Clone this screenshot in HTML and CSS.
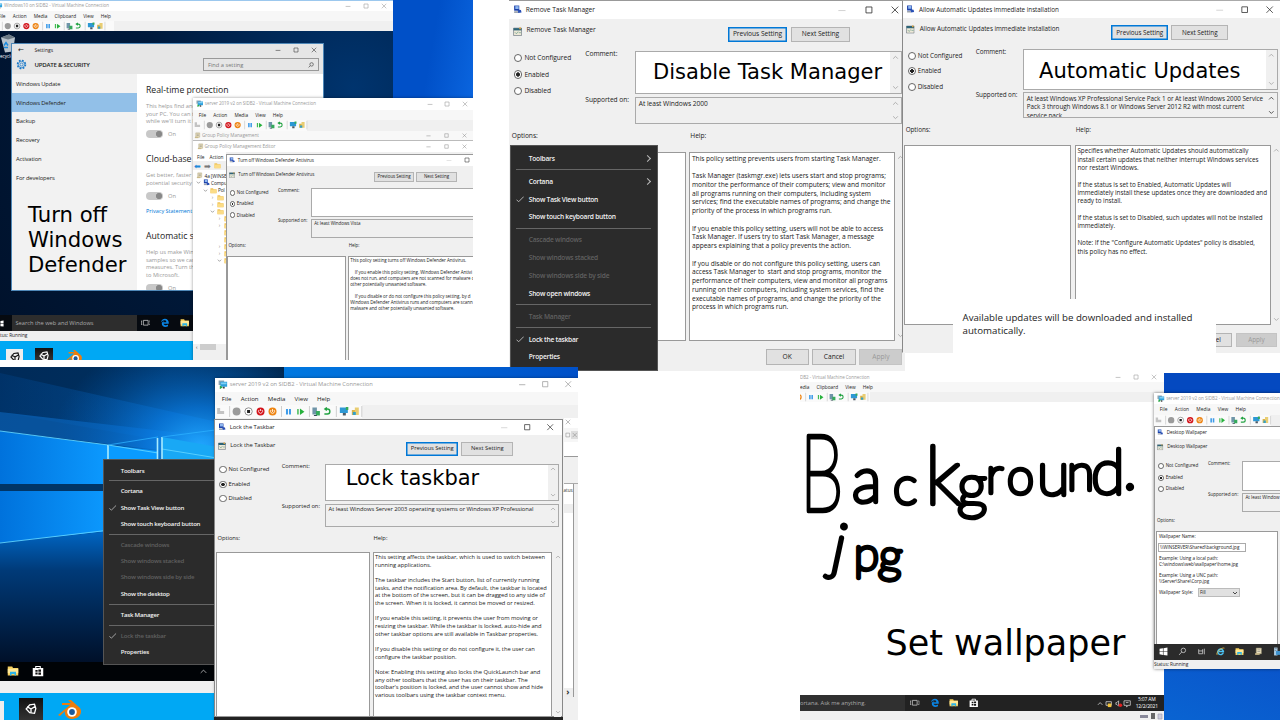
FILE: index.html
```html
<!DOCTYPE html>
<html lang="en">
<head>
<meta charset="utf-8">
<title>Group Policy settings</title>
<link rel="stylesheet" href="styles.css">
</head>
<body>
<svg class="defs" aria-hidden="true">
  <linearGradient id="sky" x1="0" y1="0" x2="1" y2=".6"><stop offset="0" stop-color="#002a58"/><stop offset=".45" stop-color="#00305f"/><stop offset="1" stop-color="#000f24"/></linearGradient>
  <radialGradient id="glow" cx="200" cy="80" r="150" gradientUnits="userSpaceOnUse" gradientTransform="translate(0 20) scale(1 .75)"><stop offset="0" stop-color="#22a8ff"/><stop offset=".35" stop-color="#0a80ea" stop-opacity=".75"/><stop offset="1" stop-color="#0058b0" stop-opacity="0"/></radialGradient>
  <linearGradient id="pane" x1="0" y1="0" x2="1" y2="0"><stop offset="0" stop-color="#0072dc"/><stop offset="1" stop-color="#0c9aff"/></linearGradient>
  <linearGradient id="beam" x1="0" y1="0" x2="1" y2="0"><stop offset="0" stop-color="#003c7c"/><stop offset="1" stop-color="#0b7fe6"/></linearGradient>
  <linearGradient id="low" x1="0" y1="0" x2="0" y2="1"><stop offset="0" stop-color="#0066c4"/><stop offset=".3" stop-color="#003a78"/><stop offset="1" stop-color="#001029" /></linearGradient>
  <symbol id="vm" viewBox="0 0 16 16"><path d="M1 1h9v7H1z" fill="#8aa4b4"/><path d="M4 3h11v8H4z" fill="#2da0dc"/><path d="M5 4h9v3H5z" fill="#7fd0f5"/><path d="M8 11h3v3H8z" fill="#444"/><path d="M3 9l5 3-5 3z" fill="#28a745"/></symbol>
  <symbol id="pol" viewBox="0 0 16 16"><path d="M2 1h9v9H2z" fill="#1b3fa8"/><path d="M4 2h6v5H4z" fill="#8fb8f0"/><path d="M8 8l6 1 1 4-6 1z" fill="#284fb5"/><path d="M2 11h7v3H2z" fill="#9aa2ae"/></symbol>
  <symbol id="form" viewBox="0 0 16 16"><path d="M1 2h14v13H1z" fill="#eee9d8" stroke="#51606e"/><path d="M1 2h14v4H1z" fill="#2d6478"/><path d="M3 9l3 3 3-4M10 10h4" fill="none" stroke="#4c8a78"/><path d="M11 1h3v3h-3z" fill="#e0a33c"/></symbol>
  <symbol id="scroll" viewBox="0 0 16 16"><path d="M4 2h9v10H4z" fill="#e9dfbd" stroke="#aaa07c"/><path d="M2 11h8v3H2z" fill="#c9b98a"/><path d="M6 5h5M6 8h5" stroke="#777"/></symbol>
  <symbol id="folder" viewBox="0 0 16 16"><path d="M1 3h6l1 2h7v9H1z" fill="#f0c45a"/><path d="M1 6h14v8H1z" fill="#fbdc86"/></symbol>
  <symbol id="explorer" viewBox="0 0 16 16"><path d="M1 2h6l1 2h7v10H1z" fill="#f5cf5e"/><path d="M1 5h14v6H1z" fill="#ffe896"/><path d="M4 14V9h8v5h-2v-2H6v2z" fill="#2bb4e8"/></symbol>
  <symbol id="edge" viewBox="0 0 16 16"><path d="M1.500 7.500C2 3.500 5 1.200 8.300 1.200c4 0 6.500 3 6.500 6.800v1.500H6c.4 2.600 4.400 3.300 7.500 1.600v2.800C8.500 16.500 3 14.500 3 9.800c0-2.300 1.300-4 3.300-4.900-.5.700-.7 1.400-.8 2.100h5.200c0-4.200-6-4-9.200.5z" fill="#0a84e4"/></symbol>
  <symbol id="ie" viewBox="0 0 16 16"><path d="M13 10a5 5 0 1 1 .2-2H5" fill="none" stroke="#4cc4f5" stroke-width="2.600"/><path d="M2 14C-1 10 10 0 15 2" fill="none" stroke="#f2c84b" stroke-width="1.400"/></symbol>
  <symbol id="store" viewBox="0 0 16 16"><path d="M5 5V2h6v3" fill="none" stroke="#fff" stroke-width="1.400"/><path d="M1 4h14v11H1z" fill="#fff"/><path d="M4.500 6.500h3v2.500h-3zM8.500 6h3.500v3H8.500zM4.500 10h3v2.500h-3zM8.500 10h3.500v3H8.500z" fill="#111"/></symbol>
  <symbol id="taskview" viewBox="0 0 16 16"><path d="M4 4h8v8H4zM2 5H.5v6H2M14 5h1.500v6H14" fill="none" stroke="#ccc" stroke-width="1.300"/></symbol>
  <symbol id="win" viewBox="0 0 16 16"><path d="M1 3l6-1v5.500H1zM8 2l7-1v6.500H8zM1 8.500h6V14l-6-1zM8 8.500h7V15l-7-1z" fill="#fff"/></symbol>
  <symbol id="srv" viewBox="0 0 16 16"><path d="M2 1h6v14H2z" fill="#b9d7ee"/><path d="M5 7h10v7H5z" fill="#3f93cf"/><path d="M3 3h4M3 6h3" stroke="#456"/></symbol>
  <symbol id="gear" viewBox="0 0 16 16"><circle cx="8" cy="8" r="5.800" fill="none" stroke="#1878c8" stroke-width="2.200" stroke-dasharray="2.600 1.950"/><circle cx="8" cy="8" r="4.600" fill="none" stroke="#1878c8" stroke-width="1.100"/><circle cx="8" cy="8" r="2.200" fill="none" stroke="#1878c8" stroke-width="1.100"/></symbol>
  <symbol id="unity" viewBox="0 0 16 16"><path d="M8 8L3.500 5.300M8 8l4.500-2.700M8 8v5.200M2.500 8L6.500 3.300l5.500-.8 1.500 5-1.500 5.500-5.500-.8z" fill="none" stroke="currentColor" stroke-width="1.500"/></symbol>
  <symbol id="blender" viewBox="0 0 24 20"><path d="M1 15L13 5H5V3h9l-3-3h3l9 8c3 5-1 11-8 11-5 0-8-4-7-8l-5 5z" fill="#ee7d0e"/><circle cx="15" cy="12" r="4.800" fill="#fff"/><circle cx="15" cy="12" r="2.900" fill="#1e5a9c"/></symbol>
  <symbol id="bin" viewBox="0 0 16 18"><path d="M1 3l8-3 6 3-2 14-8 1z" fill="#b9c3cb"/><path d="M1 3l7 2 7-2-6-3z" fill="#6d7a85"/><path d="M4 11l2-3 2 3M4 13h4" fill="none" stroke="#1a8be0" stroke-width="1.500"/></symbol>
  <symbol id="check" viewBox="0 0 8 8"><path d="M.5 4.500l2 2L7.500 1.500" fill="none" stroke="#bbb" stroke-width=".9"/></symbol>
  <symbol id="ctl-min" viewBox="0 0 10 10"><path d="M2 5.500h6" stroke="currentColor" stroke-width=".7"/></symbol>
  <symbol id="ctl-max" viewBox="0 0 10 10"><path d="M2.500 2.500h5v5h-5z" fill="none" stroke="currentColor" stroke-width=".7"/></symbol>
  <symbol id="ctl-x" viewBox="0 0 10 10"><path d="M2.200 2.200l5.600 5.600M7.800 2.200l-5.600 5.600" stroke="currentColor" stroke-width=".7"/></symbol>
  <symbol id="up" viewBox="0 0 6 6"><path d="M1 4l2-2 2 2" fill="none" stroke="currentColor" stroke-width=".8"/></symbol>
  <symbol id="down" viewBox="0 0 6 6"><path d="M1 2l2 2 2-2" fill="none" stroke="currentColor" stroke-width=".8"/></symbol>
  <symbol id="tools" viewBox="0 0 150 13">
    <path d="M2 9V3h3v3h4v3z" fill="#c3c3c3"/><path d="M14.500 1v11M66.500 1v11M94.500 1v11M121.500 1v11M147 1v11" stroke="#cfcfcf"/>
    <circle cx="21.500" cy="6.500" r="4" fill="#9b9b9b"/><circle cx="33.500" cy="6.500" r="3.700" fill="#fff" stroke="#777" stroke-width=".8"/><path d="M32 5h3v3h-3z" fill="#222"/>
    <circle cx="45.500" cy="6.500" r="4" fill="#d3151c"/><path d="M44 5a2 2 0 1 0 3 0M45.500 4v2" fill="none" stroke="#fff" stroke-width=".8"/>
    <circle cx="57.500" cy="6.500" r="4" fill="#ee8412"/><path d="M57.500 4v3M56 5a2 2 0 1 0 3 0" fill="none" stroke="#fff" stroke-width=".8"/>
    <path d="M71 4h2v5.500h-2zM74 4h2v5.500h-2z" fill="#3d9be9"/><path d="M83 4v5.500" stroke="#27b13c" stroke-width="1.300"/><path d="M85 3.500L89.500 6.700 85 10z" fill="#27b13c"/>
    <path d="M97.500 2.500h4.500v7h-4.500z" fill="#6f95a8"/><path d="M101 6h4v4.500h-4z" fill="#35aa5b"/><path d="M99 10h3v1h-3z" fill="#345"/><path d="M111 4h1.500a2.300 2.300 0 0 1 0 5h-3M112 2.500L110 4l2 1.500" fill="none" stroke="#23a343" stroke-width="1.400"/>
    <path d="M125 2.500h8V8h-8z" fill="#2d98d4"/><path d="M128 8h3v2.500h-3z" fill="#4a5a66"/><path d="M131 2h2.500v3H131z" fill="#35aa5b"/>
    <path d="M137 5h4v5h-4z" fill="#d9b44a"/><path d="M140 2.500h4V10h-4z" fill="#e9cd72"/><path d="M138 7h3v3h-3z" fill="#35a0c8"/>
  </symbol>
</svg>

<main class="board">

<!-- Remove Task Manager -->
<section class="shot shot-task">
  <div class="dlg dlg-task">
    <header class="dlg-title"><svg><use href="#pol"/></svg><span class="t">Remove Task Manager</span><div class="ctl"><svg class="off"><use href="#ctl-min"/></svg><svg><use href="#ctl-max"/></svg><svg><use href="#ctl-x"/></svg></div></header>
    <div class="dlg-head"><div class="dlg-name"><svg><use href="#form"/></svg><span class="t">Remove Task Manager</span></div><span class="btn focus"><span class="t">Previous Setting</span></span><span class="btn"><span class="t">Next Setting</span></span></div>
    <div class="dlg-form">
      <div class="radios"><label><i></i><span class="t">Not Configured</span></label><label><i class="on"></i><span class="t">Enabled</span></label><label><i></i><span class="t">Disabled</span></label></div>
      <div class="labels"><span class="t">Comment:</span><span class="t">Supported on:</span></div>
      <div class="boxes"><div class="box comment"><span class="note">Disable Task Manager</span><span class="bar"><svg><use href="#up"/></svg><svg><use href="#down"/></svg></span></div><div class="box support"><span class="t">At least Windows 2000</span><span class="bar"><svg><use href="#up"/></svg><svg><use href="#down"/></svg></span></div></div>
    </div>
    <div class="heads"><span class="t">Options:</span><span class="t">Help:</span></div>
    <div class="panels"><div class="panel"></div><div class="panel"><pre>This policy setting prevents users from starting Task Manager.

Task Manager (taskmgr.exe) lets users start and stop programs;
monitor the performance of their computers; view and monitor
all programs running on their computers, including system
services; find the executable names of programs; and change the
priority of the process in which programs run.

If you enable this policy setting, users will not be able to access
Task Manager. If users try to start Task Manager, a message
appears explaining that a policy prevents the action.

If you disable or do not configure this policy setting, users can
access Task Manager to  start and stop programs, monitor the
performance of their computers, view and monitor all programs
running on their computers, including system services, find the
executable names of programs, and change the priority of the
process in which programs run.</pre></div><span class="bar"><svg><use href="#up"/></svg><svg><use href="#down"/></svg></span></div>
    <footer class="dlg-foot"><span class="btn"><span class="t">OK</span></span><span class="btn"><span class="t">Cancel</span></span><span class="btn off"><span class="t">Apply</span></span></footer>
  </div>
  <ul class="menu menu-task">
    <li>Toolbars<b></b></li><li class="sep"></li>
    <li>Cortana<b></b></li><li><svg><use href="#check"/></svg>Show Task View button</li><li>Show touch keyboard button</li><li class="sep"></li>
    <li class="dim">Cascade windows</li><li class="dim">Show windows stacked</li><li class="dim">Show windows side by side</li><li>Show open windows</li><li class="sep"></li>
    <li class="dim">Task Manager</li><li class="sep"></li>
    <li><svg><use href="#check"/></svg>Lock the taskbar</li><li>Properties</li>
  </ul>
</section>

<!-- Automatic Updates -->
<section class="shot shot-auto">
  <div class="dlg dlg-auto">
    <header class="dlg-title"><svg><use href="#pol"/></svg><span class="t">Allow Automatic Updates immediate installation</span><div class="ctl"><svg class="off"><use href="#ctl-min"/></svg><svg><use href="#ctl-max"/></svg><svg><use href="#ctl-x"/></svg></div></header>
    <div class="dlg-head"><div class="dlg-name"><svg><use href="#form"/></svg><span class="t">Allow Automatic Updates immediate installation</span></div><span class="btn focus"><span class="t">Previous Setting</span></span><span class="btn"><span class="t">Next Setting</span></span></div>
    <div class="dlg-form">
      <div class="radios"><label><i></i><span class="t">Not Configured</span></label><label><i class="on"></i><span class="t">Enabled</span></label><label><i></i><span class="t">Disabled</span></label></div>
      <div class="labels"><span class="t">Comment:</span><span class="t">Supported on:</span></div>
      <div class="boxes"><div class="box comment"><span class="note">Automatic Updates</span><span class="bar"><svg><use href="#up"/></svg><svg><use href="#down"/></svg></span></div><div class="box support"><pre>At least Windows XP Professional Service Pack 1 or At least Windows 2000 Service
Pack 3 through Windows 8.1 or Windows Server 2012 R2 with most current
service pack</pre><span class="bar dark"><svg><use href="#up"/></svg><svg><use href="#down"/></svg></span></div></div>
    </div>
    <div class="heads"><span class="t">Options:</span><span class="t">Help:</span></div>
    <div class="panels"><div class="panel"></div><div class="panel"><pre>Specifies whether Automatic Updates should automatically
install certain updates that neither interrupt Windows services
nor restart Windows.

If the status is set to Enabled, Automatic Updates will
immediately install these updates once they are downloaded and
ready to install.

If the status is set to Disabled, such updates will not be installed
immediately.

Note: If the "Configure Automatic Updates" policy is disabled,
this policy has no effect.</pre></div><span class="bar"><svg><use href="#up"/></svg><svg><use href="#down"/></svg></span></div>
    <footer class="dlg-foot"><span class="btn cut"><span class="t">el</span></span><span class="btn off"><span class="t">Apply</span></span></footer>
  </div>
  <p class="caption">Available updates will be downloaded and installed<br>automatically.</p>
</section>

<!-- Windows Defender -->
<section class="shot shot-def">
  <div class="vmwin vm-win10">
    <div class="vm-title"><svg><use href="#vm"/></svg><span class="t">Windows10 on SIDB2 - Virtual Machine Connection</span><div class="ctl"><svg><use href="#ctl-min"/></svg><svg><use href="#ctl-max"/></svg><svg><use href="#ctl-x"/></svg></div></div>
    <div class="vm-menu"><span>File</span><span>Action</span><span>Media</span><span>Clipboard</span><span>View</span><span>Help</span></div>
    <div class="vm-tools"><svg><use href="#tools"/></svg></div>
    <div class="desk-dark"><svg class="bin"><use href="#bin"/></svg><span class="bin-label">ecycle</span>
      <div class="settings">
        <div class="set-title"><span class="back">←</span><span>Settings</span><div class="ctl"><svg><use href="#ctl-min"/></svg><svg><use href="#ctl-max"/></svg><svg><use href="#ctl-x"/></svg></div></div>
        <div class="set-head"><svg><use href="#gear"/></svg><b>UPDATE &amp; SECURITY</b><span class="find">Find a setting<svg viewBox="0 0 8 8"><circle cx="4.800" cy="3.200" r="2.300"/><path d="M3 5L.8 7.200"/></svg></span></div>
        <div class="set-body">
          <nav><a>Windows Update</a><a class="sel">Windows Defender</a><a>Backup</a><a>Recovery</a><a>Activation</a><a>For developers</a></nav>
          <article>
            <h3>Real-time protection</h3><p>This helps find and<br>your PC. You can t<br>while we'll turn it b</p><div class="sw"><i></i>On</div>
            <h3>Cloud-base</h3><p>Get better, faster<br>potential security</p><div class="sw tight"><i></i>On</div><a>Privacy Statement</a>
            <h3>Automatic s</h3><p>Help us make Win<br>samples so we can<br>measures. Turn th<br>to Microsoft.</p><div class="sw"><i></i>On</div>
          </article>
        </div>
      </div>
    </div>
    <div class="task10"><svg class="w"><use href="#win"/></svg><span class="search">Search the web and Windows</span><svg><use href="#taskview"/></svg><svg><use href="#edge"/></svg><svg><use href="#explorer"/></svg></div>
    <div class="status cutl">tus: Running</div>
  </div>
  <div class="host-icons"><span class="tile light"><svg><use href="#unity"/></svg></span><span class="tile"><svg><use href="#unity"/></svg></span><svg class="bl"><use href="#blender"/></svg></div>
  <p class="note note-def">Turn off<br>Windows<br>Defender</p>
  <div class="vmwin vm-srv1">
    <div class="vm-title"><svg><use href="#vm"/></svg><span class="t">server 2019 v2 on SIDB2 - Virtual Machine Connection</span><div class="ctl"><svg><use href="#ctl-min"/></svg><svg><use href="#ctl-max"/></svg><svg><use href="#ctl-x"/></svg></div></div>
    <div class="vm-menu"><span>File</span><span>Action</span><span>Media</span><span>View</span><span>Help</span></div>
    <div class="vm-tools"><svg><use href="#tools"/></svg></div>
    <div class="gp-row one"><svg><use href="#scroll"/></svg><span>Group Policy Management</span><div class="ctl"><svg><use href="#ctl-min"/></svg><svg><use href="#ctl-max"/></svg><svg><use href="#ctl-x"/></svg></div></div>
    <div class="gp-row two"><svg><use href="#scroll"/></svg><span>Group Policy Management Editor</span><div class="ctl"><svg><use href="#ctl-min"/></svg><svg><use href="#ctl-max"/></svg><svg><use href="#ctl-x"/></svg></div></div>
    <div class="gp-menu"><span>File</span><span>Action</span></div>
    <div class="gp-tools"><span>⬅</span><span class="g">➡</span><svg><use href="#folder"/></svg></div>
    <div class="tree">
      <div><svg><use href="#scroll"/></svg>4a [WINSE</div><div><svg class="a"><use href="#down"/></svg><svg><use href="#pol"/></svg>Compu</div><div class="l1"><svg class="a"><use href="#down"/></svg><svg><use href="#folder"/></svg>Pol</div>
      <div class="l2"><em>›</em><svg><use href="#folder"/></svg></div><div class="l2"><em>›</em><svg><use href="#folder"/></svg></div><div class="l2"><svg class="a"><use href="#down"/></svg><svg><use href="#folder"/></svg></div>
      <div class="l3"><em>›</em><svg><use href="#folder"/></svg></div><div class="l3"><em>›</em><svg><use href="#folder"/></svg></div><div class="l3"><em></em><svg><use href="#folder"/></svg></div><div class="l3"><em></em><svg><use href="#folder"/></svg></div><div class="l3"><em>›</em><svg><use href="#folder"/></svg></div><div class="l3"><em>›</em><svg><use href="#folder"/></svg></div><div class="l3"><svg class="a"><use href="#down"/></svg><svg><use href="#folder"/></svg></div>
    </div>
    <div class="hbar"><em>‹</em><i></i></div>
  </div>
  <div class="dlg dlg-def">
    <header class="dlg-title"><svg><use href="#pol"/></svg><span class="t">Turn off Windows Defender Antivirus</span><div class="ctl"><svg class="off"><use href="#ctl-min"/></svg><svg><use href="#ctl-max"/></svg><svg><use href="#ctl-x"/></svg></div></header>
    <div class="dlg-head"><div class="dlg-name"><svg><use href="#form"/></svg><span class="t">Turn off Windows Defender Antivirus</span></div><span class="btn"><span class="t">Previous Setting</span></span><span class="btn"><span class="t">Next Setting</span></span></div>
    <div class="dlg-form">
      <div class="radios"><label><i></i><span class="t">Not Configured</span></label><label><i class="on"></i><span class="t">Enabled</span></label><label><i></i><span class="t">Disabled</span></label></div>
      <div class="labels"><span class="t">Comment:</span><span class="t">Supported on:</span></div>
      <div class="boxes"><div class="box comment"></div><div class="box support"><span class="t">At least Windows Vista</span></div></div>
    </div>
    <div class="heads"><span class="t">Options:</span><span class="t">Help:</span></div>
    <div class="panels"><div class="panel"></div><div class="panel"><pre>This policy setting turns off Windows Defender Antivirus.

    If you enable this policy setting, Windows Defender Antivi
does not run, and computers are not scanned for malware o
other potentially unwanted software.

    If you disable or do not configure this policy setting, by d
Windows Defender Antivirus runs and computers are scann
malware and other potentially unwanted software.</pre></div></div>
  </div>
</section>

<!-- Lock the Taskbar -->
<section class="shot shot-lock">
  <svg class="hero" viewBox="0 0 284 295" preserveAspectRatio="none">
    <path d="M0 0h284v295H0z" fill="url(#sky)"/>
    <path d="M0 6L284 70v25L0 45z" fill="url(#beam)" opacity=".45"/>
    <path d="M0 45L284 78v20L0 64z" fill="#0a62b8" opacity=".7"/>
    <path d="M0 0h284v295H0z" fill="url(#glow)"/>
    <path d="M0 64L108 78v42L0 117z" fill="url(#pane)"/><path d="M108 78l50 6v40H108z" fill="#0a9bff"/><path d="M162 70l122 22v40H162z" fill="#19a8f5"/>
    <path d="M0 124h110v40L0 176z" fill="url(#pane)"/><path d="M0 117h110v7H0z" fill="#013566"/>
    <path d="M0 176l110-12v131H0z" fill="url(#low)"/>
    <path d="M0 64L108 78l50 8M162 82l122 20M0 176l110-13" stroke="#5fd2ff" fill="none" stroke-width=".9"/>
    <path d="M108 78v50M157.500 71v23M162 70v24" stroke="#a8ecff" fill="none" stroke-width="1.600"/>
    <path d="M108 78l50-8M162 70l53-7" stroke="#2bb0ff" fill="none" stroke-width=".8"/>
  </svg>
  <div class="task-lock"><svg><use href="#explorer"/></svg><svg><use href="#store"/></svg><svg class="tray" viewBox="0 0 10 10"><path d="M1 7l4-4 4 4"/></svg></div>
  <div class="host-status"></div>
  <div class="host-icons low"><span class="tile light"></span><span class="tile"><svg><use href="#unity"/></svg></span><svg class="bl"><use href="#blender"/></svg></div>
  <ul class="menu menu-lock">
    <li>Toolbars</li><li class="sep"></li>
    <li>Cortana</li><li><svg><use href="#check"/></svg>Show Task View button</li><li>Show touch keyboard button</li><li class="sep"></li>
    <li class="dim">Cascade windows</li><li class="dim">Show windows stacked</li><li class="dim">Show windows side by side</li><li>Show the desktop</li><li class="sep"></li>
    <li>Task Manager</li><li class="sep"></li>
    <li class="dim"><svg><use href="#check"/></svg>Lock the taskbar</li><li>Properties</li>
  </ul>
  <div class="vmwin vm-srv2">
    <div class="vm-title"><svg><use href="#vm"/></svg><span class="t">server 2019 v2 on SIDB2 - Virtual Machine Connection</span><div class="ctl"><svg><use href="#ctl-min"/></svg><svg><use href="#ctl-max"/></svg><svg><use href="#ctl-x"/></svg></div></div>
    <div class="vm-menu"><span>File</span><span>Action</span><span>Media</span><span>View</span><span>Help</span></div>
    <div class="vm-tools"><svg><use href="#tools"/></svg></div>
    <div class="edge-col"><div class="e1"><svg><use href="#ctl-x"/></svg></div><div class="e2"><svg><use href="#ctl-max"/></svg><svg class="cx"><use href="#ctl-x"/></svg></div><div class="e3"></div><div class="e4"><span>atus</span><i></i><b>›</b></div></div>
  </div>
  <div class="dlg dlg-lock">
    <header class="dlg-title"><svg><use href="#pol"/></svg><span class="t">Lock the Taskbar</span><div class="ctl"><svg class="off"><use href="#ctl-min"/></svg><svg><use href="#ctl-max"/></svg><svg><use href="#ctl-x"/></svg></div></header>
    <div class="dlg-head"><div class="dlg-name"><svg><use href="#form"/></svg><span class="t">Lock the Taskbar</span></div><span class="btn focus"><span class="t">Previous Setting</span></span><span class="btn"><span class="t">Next Setting</span></span></div>
    <div class="dlg-form">
      <div class="radios"><label><i></i><span class="t">Not Configured</span></label><label><i class="on"></i><span class="t">Enabled</span></label><label><i></i><span class="t">Disabled</span></label></div>
      <div class="labels"><span class="t">Comment:</span><span class="t">Supported on:</span></div>
      <div class="boxes"><div class="box comment"><span class="note">Lock taskbar</span><span class="bar"><svg><use href="#up"/></svg><svg><use href="#down"/></svg></span></div><div class="box support"><span class="t">At least Windows Server 2003 operating systems or Windows XP Professional</span><span class="bar"><svg><use href="#up"/></svg><svg><use href="#down"/></svg></span></div></div>
    </div>
    <div class="heads"><span class="t">Options:</span><span class="t">Help:</span></div>
    <div class="panels"><div class="panel"></div><div class="panel"><pre>This setting affects the taskbar, which is used to switch between
running applications.

The taskbar includes the Start button, list of currently running
tasks, and the notification area. By default, the taskbar is located
at the bottom of the screen, but it can be dragged to any side of
the screen. When it is locked, it cannot be moved or resized.

If you enable this setting, it prevents the user from moving or
resizing the taskbar. While the taskbar is locked, auto-hide and
other taskbar options are still available in Taskbar properties.

If you disable this setting or do not configure it, the user can
configure the taskbar position.

Note: Enabling this setting also locks the QuickLaunch bar and
any other toolbars that the user has on their taskbar. The
toolbar's position is locked, and the user cannot show and hide
various toolbars using the taskbar context menu.</pre></div><span class="bar"><svg><use href="#up"/></svg><svg><use href="#down"/></svg></span></div>
  </div>
</section>

<!-- Desktop Wallpaper -->
<section class="shot shot-wall">
  <div class="vmwin vm-wall">
    <div class="vm-title"><span class="t">DB2 - Virtual Machine Connection</span><div class="ctl"><svg><use href="#ctl-min"/></svg><svg><use href="#ctl-max"/></svg><svg><use href="#ctl-x"/></svg></div></div>
    <div class="vm-menu"><span>edia</span><span>Clipboard</span><span>View</span><span>Help</span></div>
    <div class="vm-tools"><svg><use href="#tools"/></svg></div>
    <svg class="paper" viewBox="800 402 364 293">
      <text class="ink" transform="translate(800 511) scale(.66 1)" font-size="106">B</text>
      <text class="ink" x="852 893 925 957 986 1007 1037 1067 1091 1123" y="502 504 504 507 493 494 495 490 494 489"><tspan font-size="62">a</tspan><tspan font-size="52">c</tspan><tspan font-size="80">k</tspan><tspan font-size="60">g</tspan><tspan font-size="50">r</tspan><tspan font-size="49">o</tspan><tspan font-size="60">u</tspan><tspan font-size="50">n</tspan><tspan font-size="62">d</tspan><tspan font-size="60">.</tspan></text>
      <text class="ink" x="829 854 878" y="566 570 571" rotate="12 0 4"><tspan font-size="62">j</tspan><tspan font-size="46">p</tspan><tspan font-size="46">g</tspan></text>
      <text class="big" x="885.500" y="655">Set wallpaper</text>
    </svg>
    <div class="task10 tw"><span class="search">ortana. Ask me anything.</span><svg><use href="#taskview"/></svg><svg><use href="#edge"/></svg><svg><use href="#explorer"/></svg><svg><use href="#store"/></svg><span class="tray"><svg viewBox="0 0 40 10"><path d="M1 6.500l2.500-2.500L6 6.500M10 3h6v4h-6zM30 2h7v5h-3l-1 2V7h-3zM32 4h3M21 4h1l2-2v6l-2-2h-1z"/><path d="M12 5h4v4h-4z" class="y"/><circle cx="26" cy="7" r="2" class="r"/></svg></span><span class="clock">5:07 AM<br>12/2/2021</span></div>
    <div class="status right"><svg viewBox="0 0 24 8"><path d="M0 3h8v3H0z" fill="#889"/><path d="M11 1h4v6h-4z" fill="#666"/><path d="M18 2h4v5h-4z" fill="#ccd" stroke="#99a" stroke-width=".6"/></svg></div>
  </div>
  <div class="vmwin vm-srv3">
    <div class="vm-title"><svg><use href="#vm"/></svg><span class="t">server 2019 v2 on SIDB2 - Virtual Machine Connection</span></div>
    <div class="vm-menu"><span>File</span><span>Action</span><span>Media</span><span>View</span><span>Help</span></div>
    <div class="vm-tools"><svg><use href="#tools"/></svg></div>
    <div class="dlg dlg-wall">
      <header class="dlg-title"><svg><use href="#pol"/></svg><span class="t">Desktop Wallpaper</span></header>
      <div class="dlg-head"><div class="dlg-name"><svg><use href="#form"/></svg><span class="t">Desktop Wallpaper</span></div></div>
      <div class="dlg-form">
        <div class="radios"><label><i></i><span class="t">Not Configured</span></label><label><i class="on"></i><span class="t">Enabled</span></label><label><i></i><span class="t">Disabled</span></label></div>
        <div class="labels"><span class="t">Comment:</span><span class="t">Supported on:</span></div>
        <div class="boxes"><div class="box comment"></div><div class="box support"><span class="t">At least Window</span></div></div>
      </div>
      <div class="heads"><span class="t">Options:</span></div>
      <div class="panels"><div class="panel opts"><span class="t">Wallpaper Name:</span><span class="field"><span class="t">\\WINSERVER\Shared\background.jpg</span></span><pre>Example: Using a local path:
C:\windows\web\wallpaper\home.jpg</pre><pre>Example: Using a UNC path:
\\Server\Share\Corp.jpg</pre><div class="style"><span class="t">Wallpaper Style:</span><span class="select"><span class="t">Fill</span><svg><use href="#down"/></svg></span></div></div><div class="panel"></div></div>
    </div>
    <div class="task19"><svg><use href="#win"/></svg><svg viewBox="0 0 16 16" class="ln"><circle cx="9.500" cy="6" r="4"/><path d="M6.500 9L2 14"/></svg><svg viewBox="0 0 16 16" class="ln"><path d="M3 4v8h7V4M3 7h7M13 3v10"/></svg><svg class="c"><use href="#ie"/></svg><svg class="c"><use href="#explorer"/></svg><svg class="c"><use href="#scroll"/></svg><svg class="c"><use href="#srv"/></svg></div>
    <div class="status">Status: Running</div>
  </div>
</section>
</main>
</body>
</html>
```
FILE: styles.css
```css
* { box-sizing: border-box; }
body { margin: 0; background: #fff; font-family: "Open Sans", "Noto Sans", sans-serif; color: #222; }
ul, p, h3, pre { margin: 0; padding: 0; }
pre { font-family: inherit; }
.defs { position: absolute; width: 0; height: 0; }
.board { position: relative; width: 1280px; height: 720px; overflow: hidden; background: #fff; }
.shot { position: absolute; overflow: hidden; }
.shot-def { left: 0; top: 0; width: 472.5px; height: 360px; background: linear-gradient(100deg, #0050c8 82%, #0b66e0 92%, #0650cf); }
.shot-task { left: 509px; top: 0; width: 396px; height: 370.5px; background: #f0f0f0; }
.shot-auto { left: 902px; top: 0; width: 378px; height: 370px; background: #fff; clip-path: polygon(0 0, 378px 0, 378px 370px, 3px 370px, 3px 352.5px, 0 352.5px); }
.shot-lock { left: 0; top: 366.5px; width: 578px; height: 353.5px; background: linear-gradient(90deg, #0078e0 50%, #0050c8); }
.shot-wall { left: 800px; top: 372.5px; width: 480px; height: 347.5px; background: linear-gradient(200deg, #0449c0 15%, #0a50c8 50%, #0878dc 100%); }

/* policy dialog: sized in em so each instance scales from its font-size */
.t { font-size: .95em; letter-spacing: -.006em; white-space: nowrap; line-height: 1.2; }
.dlg { position: absolute; display: flex; flex-direction: column; background: #f0f0f0; width: 57em; color: #222; }
.dlg-task { left: 0; top: 0; font-size: 7px; height: 371px; border-top: 1px solid #999; }
.dlg-auto { left: 0; top: 0; font-size: 6.67px; height: 352.500px; border-left: 1px solid #888; border-top: 1px solid #aaa; }
.dlg-def { left: 225.5px; top: 153.500px; font-size: 4.72px; height: 220px; border: 1px solid #999; }
.dlg-lock { left: 214px; top: 52.300px; font-size: 6.12px; height: 298px; border: 1px solid #888; box-shadow: 0 4px #222; }
.dlg-wall { position: relative; font-size: 4.86px; height: 218px; flex: none; border: 1px solid #999; border-bottom: 0; overflow: hidden; }
.dlg-title { height: 2.5em; flex: none; background: #fff; display: flex; align-items: center; padding-left: .5em; gap: .6em; }
.dlg-title > svg, .dlg-name svg { width: 1.3em; height: 1.3em; flex: none; }
.ctl { margin-left: auto; display: flex; gap: 2.1em; padding-right: .4em; color: #333; }
.ctl svg { width: 1.7em; height: 1.7em; }
.ctl .off { opacity: .25; }
.dlg-title .ctl { padding-right: 1em; }
.dlg-head { height: 4.4em; flex: none; display: flex; padding-top: 1.15em; gap: .5em; }
.dlg-name { width: 30.75em; display: flex; gap: .7em; padding-left: .5em; align-items: flex-start; }
.dlg-name .t { margin-top: -.05em; }
.btn { width: 8.5em; height: 2.2em; border: 1px solid #b4b4b4; background: #e1e1e1; display: flex; align-items: center; justify-content: center; }
.btn.focus { border: 1px solid #0078d7; box-shadow: inset 0 0 0 .5px #0078d7; }
.btn.off { background: #ccc; border-color: #c4c4c4; color: #999; }
.btn.cut { padding-left: 2em; }
.dlg-form { height: 11.7em; flex: none; display: grid; grid-template-columns: 10.9em 7.1em 38.2em; }
.radios { padding: .1em 0 0 .7em; }
.radios label { display: flex; align-items: center; gap: .3em; height: 2.35em; }
.radios i { width: 1.2em; height: 1.2em; border: .8px solid #666; border-radius: 50%; background: #fff; }
.radios i.on { background: radial-gradient(#222 38%, #fff 50%); }
.labels { display: flex; flex-direction: column; }
.labels .t { height: 6.83em; padding-top: .15em; }
.boxes { padding-top: .25em; display: flex; flex-direction: column; gap: .4em; }
.box { border: 1px solid #aaa; display: flex; overflow: hidden; }
.comment { height: 6.15em; background: #fff; }
.support { height: 3.9em; padding-left: .4em; }
.support .t, .support pre { margin-top: .25em; }
.bar { margin-left: auto; width: 1.6em; flex: none; display: flex; flex-direction: column; justify-content: space-between; align-items: center; color: #aaa; background: #f0f0f0; padding: .3em 0; }
.bar.dark { color: #444; }
.bar svg { width: 1em; height: 1em; }
.note { font-family: "DejaVu Sans", sans-serif; color: #000; font-size: 21.06px; line-height: 25px; white-space: nowrap; }
.comment .note { padding-left: 17px; padding-top: 7px; }
.dlg-auto .note { padding-left: 15px; padding-top: 9px; font-size: 21px; }
.dlg-lock .note { padding-left: 19.500px; padding-top: 1px; font-size: 21px; }
.heads { height: 3em; flex: none; display: grid; grid-template-columns: 25.5em 1fr; padding: .15em 0 0 .4em; }
.panels { height: 27em; flex: none; display: grid; grid-template-columns: 25.1em 29.4em 1.1em; column-gap: .5em; padding-left: .15em; }
.panel { background: #fff; border: 1.3px solid #999; padding: .2em 0 0 .25em; overflow: hidden; }
.panels > .bar { margin: 0 0 0 -.2em; width: 1.1em; }
.dlg pre { font-size: .95em; line-height: 1.316em; letter-spacing: -.006em; }
.dlg-foot { display: flex; justify-content: flex-end; gap: .55em; padding: 1.15em .8em 0 0; }
.dlg-foot .btn { width: 6.15em; }

/* dark taskbar context menu */
.menu { position: absolute; list-style: none; background: #2b2b2b; border: 1px solid #555; color: #f2f2f2; padding-top: .45em; }
.menu li { font-size: .95em; height: 2.674em; display: flex; align-items: center; padding-left: 2.74em; position: relative; font-weight: 600; letter-spacing: -.035em; white-space: nowrap; }
.menu li.sep { height: .779em; padding: 0 .85em; }
.menu li.sep::before { content: ""; flex: 1; height: 1px; background: #666; }
.menu .dim { color: #606060; }
.menu svg { position: absolute; left: .85em; width: 1.25em; height: 1.25em; }
.menu b { margin-left: auto; margin-right: 1em; width: 5px; height: 5px; border: solid #bbb; border-width: 1px 1px 0 0; transform: rotate(45deg); }
.menu-task { left: .5px; top: 145.300px; width: 148px; height: 226px; font-size: 7px; }
.menu-lock { left: 103px; top: 92px; width: 130px; height: 206px; font-size: 6.4px; }
.menu-lock li.sep { padding-right: 0; }

.caption { position: absolute; left: 51px; top: 299px; width: 263px; height: 71px; background: #fff; padding: 12px 0 0 9.5px; font-size: 9.7px; line-height: 13.4px; }

/* VM connection windows */
.vmwin { position: absolute; display: flex; flex-direction: column; background: #f0f0f0; }
.vm-title { height: 2.3em; flex: none; background: #fff; display: flex; align-items: center; gap: .3em; padding-left: .6em; color: #999; overflow: hidden; }
.vm-title > svg { width: 1.6em; height: 1.6em; flex: none; }
.vm-title .ctl { color: #999; }
.vm-menu { height: 2.15em; flex: none; background: #f7f7f7; display: flex; align-items: center; gap: 1.5em; padding-left: 1.2em; }
.vm-tools { height: 2.25em; flex: none; background: linear-gradient(90deg, #fafafa 24em, #f0f0f0 24em); }
.vm-tools svg { display: block; width: 24.5em; height: 2.12em; }
.vm-win10 { left: 0; top: 0; width: 393px; height: 341px; font-size: 4.75px; border-top: 1px solid #9cc8ee; }
.vm-win10 .vm-title { padding-left: 0; margin-left: -5px; height: 9.500px; }
.vm-win10 .vm-menu { padding-left: 0; margin-left: -2px; }
.vm-win10 .vm-tools svg { margin-left: -9px; }
.vm-srv1 { left: 193px; top: 98px; width: 290px; height: 270px; font-size: 4.75px; box-shadow: 0 0 3px #0006; }
.vm-srv1 .vm-title { height: 12px; }
.vm-srv1 .vm-title .ctl { gap: 1.95em; padding-right: 3em; }
.vm-srv2 { left: 214.5px; top: 11px; width: 364px; height: 345px; font-size: 6.12px; box-shadow: 0 0 3px #0006; }
.vm-srv2 .ctl { padding-right: .8em; }
.vm-wall { left: 0; top: 0; width: 364px; height: 348px; font-size: 4.75px; }
.vm-wall .vm-title { height: 9.5px; padding-left: 0; }
.vm-wall .vm-title .ctl { padding-right: 1.2em; }
.vm-wall .vm-menu { padding-left: 0; }
.vm-wall .vm-tools { height: 10px; overflow: hidden; background: #f0f0f0; }
.vm-wall .vm-tools svg { margin-left: -46px; background: #fafafa; }
.vm-srv3 { left: 354px; top: 20.500px; width: 126px; height: 276px; font-size: 4.86px; box-shadow: 0 0 3px #0008; overflow: hidden; }
.vm-win10 .vm-title .ctl { gap: 2.1em; padding-right: 1em; }

.desk-dark { flex: 1; background: radial-gradient(circle at 90% 20%, #00346e, #001a3c 50%, #00122c); position: relative; }
.bin { position: absolute; left: 0; top: 3px; width: 16px; height: 19px; }
.bin-label { position: absolute; left: 0; top: 22px; color: #fff; font-size: 4.600px; }
.settings { position: absolute; left: 11px; top: 12px; width: 313px; height: 248px; border: 1px solid #4f88b8; background: #e6e6e6; display: flex; flex-direction: column; font-size: 5.700px; overflow: hidden; }
.set-title { height: 11px; flex: none; display: flex; align-items: center; gap: 12px; padding-left: 6px; font-size: 5px; }
.back { width: 4.500px; font-size: 7px; font-family: "DejaVu Sans", sans-serif; line-height: 8px; }
.set-title .ctl { gap: 10px; padding-right: 5px; }
.set-title .ctl svg { width: 8px; height: 8px; }
.set-head { height: 19px; flex: none; display: flex; align-items: center; padding-left: 4px; }
.set-head > svg { width: 11px; height: 11px; margin-right: 7.500px; }
.set-head b { font-size: 6.100px; font-weight: 600; letter-spacing: -.04em; }
.find { margin-left: auto; margin-right: 4px; width: 116px; height: 13px; border: 1px solid #999; display: flex; align-items: center; padding: 0 4px; color: #777; justify-content: space-between; }
.find svg { width: 6px; height: 6px; fill: none; stroke: #555; }
.set-body { flex: 1; display: flex; min-height: 0; }
nav { width: 124.500px; background: #f2f2f2; }
nav a { display: flex; height: 18.800px; align-items: center; padding-left: 4px; font-size: 5.800px; letter-spacing: -.02em; }
nav a.sel { background: #92c0e8; }
article { flex: 1; background: #fff; padding: 9.500px 0 0 9.500px; white-space: nowrap; overflow: hidden; }
article h3 { font-size: 8.700px; line-height: 13px; font-weight: 400; }
article p { font-size: 5.700px; line-height: 7.800px; color: #999; margin-top: 6px; }
article a { display: block; font-size: 5.500px; color: #0078d7; margin-top: 7.500px; line-height: 8px; }
.sw { display: flex; align-items: center; gap: 5px; height: 8px; margin: 4px 0 15px; color: #999; }
.sw.tight { margin-bottom: 0; }
article a + h3 { margin-top: 14.500px; }
.sw i { width: 17px; height: 8px; border-radius: 4px; background: radial-gradient(circle at 13px 4px, #888 2.800px, #c8c8c8 3.300px); }
.task10 { height: 16px; flex: none; background: #060a10; display: flex; align-items: center; gap: 10px; color: #aaa; font-size: 5.700px; }
.task10 svg { width: 9.500px; height: 9.500px; }
.task10 .w { margin-left: -4px; width: 9px; height: 7px; }
.search { background: #2d2d2d; height: 100%; width: 125px; display: flex; align-items: center; padding-left: 4px; margin-left: -4px; margin-right: -6px; }
.task10 .w + .search { margin-left: -3.500px; margin-right: -6px; }
.status { height: 10px; flex: none; font-size: 4.800px; line-height: 9px; letter-spacing: -.01em; background: #f0f0f0; }
.host-icons { position: absolute; left: 0; top: 341px; width: 193px; height: 19px; background: #00a8f4; display: flex; align-items: flex-end; padding-left: 6px; gap: 12px; }
.tile { width: 17px; height: 11px; background: #eee; color: #111; display: flex; justify-content: center; overflow: hidden; }
.host-icons .tile + .tile { width: 18px; height: 12px; background: linear-gradient(#111, #333); color: #fff; }
.tile svg { width: 12px; height: 12px; flex: none; margin-top: 2px; }
.bl { width: 17px; height: 14px; margin-bottom: -4px; }
.host-icons.low { top: 326.500px; width: 215px; height: 27px; padding-left: 0; gap: 15px; }
.low .tile.light { width: 4px; height: 19px; }
.host-icons.low .tile + .tile { width: 24px; height: 22px; align-items: center; }
.low .tile svg { width: 14px; height: 14px; margin: 0; }
.low .bl { width: 24px; height: 20px; margin: 0; margin-left: -1px; }
.note-def { position: absolute; left: 28px; top: 202px; font-size: 21.200px; }

.gp-row { display: flex; align-items: center; flex: none; background: #fff; color: #999; font-size: 4.700px; padding-left: 1px; gap: 1px; height: 10px; letter-spacing: -.01em; }
.gp-row svg { width: 7px; height: 7px; }
.gp-row.one { background: #f8f8f8; border-bottom: 1px solid #bbb; }
.gp-row.two { height: 11px; padding-left: 3.500px; }
.gp-row .ctl { gap: 11px; padding-right: 15px; color: #888; }
.gp-menu { display: flex; gap: 5px; height: 9.500px; align-items: center; padding-left: 4px; background: #fff; flex: none; width: 33px; overflow: hidden; }
.gp-tools { display: flex; gap: 3px; height: 9px; align-items: center; padding-left: 1px; font-size: 8px; color: #1e88d8; flex: none; }
.gp-tools .g { color: #777; }
.gp-tools svg { width: 7px; height: 7px; }
.tree { flex: 1; width: 33px; background: #fff; font-size: 4.800px; padding: 2px 0 0 3px; overflow: hidden; letter-spacing: -.02em; }
.tree div { display: flex; align-items: center; height: 7.050px; gap: 1.500px; white-space: nowrap; }
.tree svg { width: 7px; height: 7px; flex: none; }
.tree svg.a, .tree em { width: 5px; font-style: normal; color: #777; flex: none; text-align: center; }
.tree .l1 { padding-left: 7px; }
.tree .l2 { padding-left: 14px; }
.tree .l3 { padding-left: 21px; }
.hbar { height: 6px; flex: none; background: #f0f0f0; display: flex; gap: 3px; padding-left: 3px; margin-bottom: 18px; align-items: center; }
.hbar i { width: 16px; height: 6px; background: #cdcdcd; }
.hbar em { font-style: normal; }

.hero { position: absolute; left: 0; top: 0; width: 284px; height: 295px; }
.task-lock { position: absolute; left: 0; top: 295px; width: 215px; height: 19px; background: #000306; display: flex; align-items: center; gap: 13px; padding-left: 7px; }
.task-lock svg { width: 12px; height: 12px; }
.task-lock .tray { margin-left: auto; margin-right: 8px; width: 7px; height: 7px; fill: none; stroke: #ddd; }
.host-status { position: absolute; left: 0; top: 314px; width: 215px; height: 12.500px; background: #f0f0f0; }
.edge-col { width: 15px; margin-left: auto; flex: 1; display: flex; flex-direction: column; color: #888; }
.edge-col svg { width: 8px; height: 8px; display: block; }
.e1 { height: 10px; background: #fff; }
.e2 { height: 14px; display: flex; align-items: center; background: #f6f6f6; }
.e2 .cx { background: #ddd; }
.e3 { height: 42px; border-bottom: 1px solid #aaa; background: linear-gradient(#fff 14px, #999 14px 15px, #f0f0f0 15px); }
.e4 { width: 10px; height: 213px; border-right: 1px solid #999; background: #fff; font-size: 4.600px; display: flex; flex-direction: column; }
.e4 span { color: #333; height: 20px; padding-top: 3px; }
.e4 i { height: 9px; background: #eee; }
.e4 b { margin-top: auto; height: 9px; line-height: 8px; background: #eee; color: #333; font-size: 9px; text-align: center; }

.paper { width: 364px; height: 293px; flex: none; background: #fff; display: block; }
.ink { font-family: Lato, sans-serif; font-weight: 100; fill: #000; stroke: #000; stroke-width: 4.500; stroke-linejoin: round; stroke-linecap: round; }
.big { font-family: "DejaVu Sans", sans-serif; font-size: 35px; fill: #000; }
.tw { background: #222; gap: 10px; }
.tw .search { width: 105px; padding-left: 0; margin-left: 0; margin-right: -5px; background: #303030; }
.tw .tray { margin-left: auto; margin-right: -7px; }
.tw .tray svg { width: 36px; height: 9px; fill: none; stroke: #ccc; stroke-width: .9; display: block; }
.tw .tray .y { fill: #f0c23c; stroke: none; }
.tw .tray .r { fill: #e02020; stroke: none; }
.clock { font-size: 5px; line-height: 7px; color: #fff; text-align: center; letter-spacing: -.03em; padding-right: 6px; }
.status.right { display: flex; justify-content: flex-end; align-items: center; }
.status.right svg { width: 24px; height: 8px; }

.opts { display: flex; flex-direction: column; padding: 0 0 0 .45em; }
.opts > .t { margin-top: 1.500px; }
.field { width: 88px; height: 9px; border: 1px solid #aaa; margin: 3.500px 0 3px -1px; display: flex; align-items: center; padding-left: 1px; flex: none; }
.opts pre { margin-bottom: 4px; line-height: 6.300px; }
.style { display: flex; align-items: center; gap: 5px; }
.select { width: 42px; height: 9px; border: 1px solid #bbb; background: #e1e1e1; display: flex; align-items: center; justify-content: space-between; padding: 0 1px; }
.select svg { width: 6px; height: 6px; }
.task19 { height: 16px; flex: none; background: #2b2b2b; display: flex; align-items: center; gap: 10px; padding-left: 5px; }
.task19 svg { width: 9px; height: 9px; flex: none; }
.task19 .ln { fill: none; stroke: #ddd; stroke-width: 1.300; }
```
